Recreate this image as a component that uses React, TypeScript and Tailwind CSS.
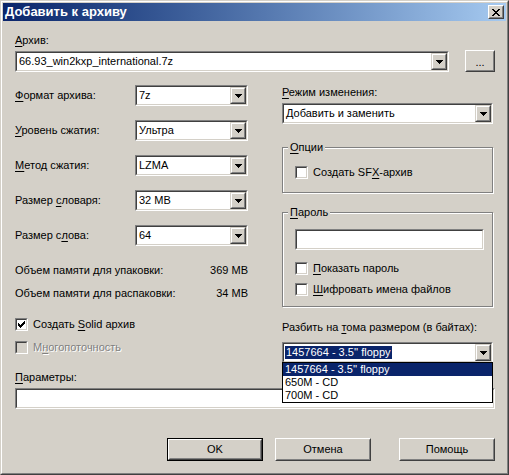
import type { ReactNode } from "react";

const FONT = "font-['Liberation_Sans',Arial,sans-serif]";

function U({ children }: { children: ReactNode }) {
  return <span className="underline underline-offset-[2px] decoration-1">{children}</span>;
}

function Sunken({ className = "", inner = "", children }: { className?: string; inner?: string; children?: ReactNode }) {
  return (
    <div className={`border border-t-[#808080] border-l-[#808080] border-r-white border-b-white ${className}`}>
      <div className={`h-full border border-t-[#404040] border-l-[#404040] border-r-[#d4d0c8] border-b-[#d4d0c8] ${inner}`}>
        {children}
      </div>
    </div>
  );
}

function Raised({ className = "", children }: { className?: string; children?: ReactNode }) {
  return (
    <div className={`border border-t-[#d4d0c8] border-l-[#d4d0c8] border-r-[#404040] border-b-[#404040] ${className}`}>
      <div className="flex h-full items-center justify-center border border-t-white border-l-white border-r-[#808080] border-b-[#808080] bg-[#d4d0c8]">
        {children}
      </div>
    </div>
  );
}

function Arrow() {
  return (
    <svg width="7" height="4" viewBox="0 0 7 4" shapeRendering="crispEdges">
      <path d="M0 0H7V1H6V2H5V3H4V4H3V3H2V2H1V1H0Z" fill="#000" />
    </svg>
  );
}

function Combo({ value, className = "", selected = false }: { value: string; className?: string; selected?: boolean }) {
  return (
    <Sunken className={`h-[21px] ${className}`} inner="flex bg-white">
      <div className="flex min-w-0 flex-1 items-center overflow-hidden whitespace-nowrap pl-[1px]">
        {selected ? (
          <span className="bg-[#0a246a] px-[1px] text-white">{value}</span>
        ) : (
          <span className="pl-[1px]">{value}</span>
        )}
      </div>
      <Raised className="h-full w-[16px] shrink-0">
        <Arrow />
      </Raised>
    </Sunken>
  );
}

function Check({ checked = false, disabled = false }: { checked?: boolean; disabled?: boolean }) {
  return (
    <Sunken
      className="h-[13px] w-[13px] shrink-0"
      inner={`flex items-center justify-center ${disabled ? "bg-[#d4d0c8]" : "bg-white"}`}
    >
      {checked ? (
        <svg width="7" height="7" viewBox="0 0 7 7" shapeRendering="crispEdges">
          <rect x="6" y="0" width="1" height="1" />
          <rect x="5" y="1" width="2" height="1" />
          <rect x="0" y="2" width="1" height="1" />
          <rect x="4" y="2" width="3" height="1" />
          <rect x="0" y="3" width="2" height="1" />
          <rect x="3" y="3" width="3" height="1" />
          <rect x="0" y="4" width="5" height="1" />
          <rect x="1" y="5" width="3" height="1" />
          <rect x="2" y="6" width="1" height="1" />
        </svg>
      ) : null}
    </Sunken>
  );
}

function CheckRow({ children, checked, disabled }: { children: ReactNode; checked?: boolean; disabled?: boolean }) {
  return (
    <div className="flex h-[13px] items-center gap-[5px]">
      <Check checked={checked} disabled={disabled} />
      <span className={disabled ? "text-[#808080] [text-shadow:1px_1px_0_#fff]" : ""}>{children}</span>
    </div>
  );
}

function Group({ label, className = "", children }: { label: ReactNode; className?: string; children?: ReactNode }) {
  return (
    <div className={`relative border border-[#808080] shadow-[inset_1px_1px_0_#fff,1px_1px_0_#fff] ${className}`}>
      <span className="absolute -top-[7px] left-[5px] bg-[#d4d0c8] px-[2px]">{label}</span>
      {children}
    </div>
  );
}

function PushButton({ children, isDefault = false, className = "" }: { children: ReactNode; isDefault?: boolean; className?: string }) {
  const face = (
    <div className="flex h-full items-center justify-center border border-t-white border-l-white border-r-[#404040] border-b-[#404040] bg-[#d4d0c8]">
      <div className="flex h-full w-full items-center justify-center border border-transparent border-r-[#808080] border-b-[#808080]">
        {children}
      </div>
    </div>
  );
  if (isDefault) {
    return <div className={`border border-black ${className}`}>{face}</div>;
  }
  return <div className={className}>{face}</div>;
}

const leftRows: { label: ReactNode; value: string }[] = [
  { label: <><U>Ф</U>ормат архива:</>, value: "7z" },
  { label: <><U>У</U>ровень сжатия:</>, value: "Ультра" },
  { label: <><U>М</U>етод сжатия:</>, value: "LZMA" },
  { label: <>Размер <U>с</U>ловаря:</>, value: "32 MB" },
  { label: <>Размер с<U>л</U>ова:</>, value: "64" },
];

export default function App() {
  return (
    <div
      className={`h-[475px] w-[509px] border border-t-[#d4d0c8] border-l-[#d4d0c8] border-r-[#404040] border-b-[#404040] bg-[#d4d0c8] text-[11px] leading-[13px] text-black ${FONT}`}
    >
      <div className="flex h-full flex-col border border-t-white border-l-white border-r-[#808080] border-b-[#808080] p-[1px]">
        {/* title bar */}
        <div className="flex h-[18px] items-center justify-between bg-linear-to-r from-[#0a246a] to-[#a6caf0] pl-[2px] pr-[2px]">
          <span className="text-[13px] font-bold leading-[16px] text-white">Добавить к архиву</span>
          <PushButton className="h-[14px] w-[16px]">
            <svg width="8" height="7" viewBox="0 0 8 7" shapeRendering="crispEdges">
              <path d="M0 0H2V1H3V2H5V1H6V0H8V1H7V2H6V3H5V4H6V5H7V6H8V7H6V6H5V5H3V6H2V7H0V6H1V5H2V4H3V3H2V2H1V1H0Z" fill="#000" />
            </svg>
          </PushButton>
        </div>

        <div className="pl-[12px] pr-[11px] pt-[13px]">
          <div>
            <U>А</U>рхив:
          </div>
          <div className="mt-[3px] flex items-end justify-between">
            <Combo className="w-[434px]" value="66.93_win2kxp_international.7z" />
            <PushButton className="h-[22px] w-[30px]">
              <span className="pt-[3px]">...</span>
            </PushButton>
          </div>

          <div className="mt-[13px] grid grid-cols-[233px_211px] items-start gap-x-[34px]">
            {/* left column */}
            <div className="flex flex-col">
              <div className="flex flex-col gap-[14px]">
                {leftRows.map((row) => (
                  <div key={row.value} className="flex h-[21px] items-center justify-between">
                    <span>{row.label}</span>
                    <Combo className="w-[113px]" value={row.value} />
                  </div>
                ))}
              </div>
              <div className="mt-[18px] flex justify-between">
                <span>Объем памяти для упаковки:</span>
                <span>369 MB</span>
              </div>
              <div className="mt-[10px] flex justify-between">
                <span>Объем памяти для распаковки:</span>
                <span>34 MB</span>
              </div>
              <div className="mt-[18px]">
                <CheckRow checked>
                  Создать <U>S</U>olid архив
                </CheckRow>
              </div>
              <div className="mt-[10px]">
                <CheckRow disabled>
                  М<U>н</U>огопоточность
                </CheckRow>
              </div>
            </div>

            {/* right column */}
            <div className="flex flex-col">
              <div className="mt-[1px]">
                <U>Р</U>ежим изменения:
              </div>
              <Combo className="mt-[4px]" value="Добавить и заменить" />
              <Group label={<><U>О</U>пции</>} className="mt-[23px] h-[46px] pl-[12px] pt-[18px]">
                <CheckRow>
                  Создать SF<U>X</U>-архив
                </CheckRow>
              </Group>
              <Group label={<><U>П</U>ароль</>} className="mt-[19px] h-[95px] pl-[12px] pt-[16px]">
                <Sunken className="h-[21px] w-[189px]" inner="bg-white" />
                <div className="mt-[12px]">
                  <CheckRow>
                    <U>П</U>оказать пароль
                  </CheckRow>
                </div>
                <div className="mt-[8px]">
                  <CheckRow>
                    <U>Ш</U>ифровать имена файлов
                  </CheckRow>
                </div>
              </Group>
              <div className="mt-[14px]">
                Разбить на <U>т</U>ома размером (в байтах):
              </div>
              <div className="relative mt-[8px]">
                <Combo value="1457664 - 3.5'' floppy" selected />
                <ul className="absolute left-0 right-0 top-[20px] z-10 border border-black bg-white">
                  <li className="h-[13px] bg-[#0a246a] pl-[2px] text-white">1457664 - 3.5'' floppy</li>
                  <li className="h-[13px] pl-[2px]">650M - CD</li>
                  <li className="h-[13px] pl-[2px]">700M - CD</li>
                </ul>
              </div>
            </div>
          </div>

          <div className="mt-[8px]">
            <U>П</U>араметры:
          </div>
          <Sunken className="mt-[4px] h-[21px] w-full" inner="bg-white" />

          <div className="mt-[29px] flex justify-end">
            <PushButton isDefault className="h-[23px] w-[96px]">
              OK
            </PushButton>
            <PushButton className="ml-[12px] h-[23px] w-[96px]">Отмена</PushButton>
            <PushButton className="ml-[28px] h-[23px] w-[96px]">Помощь</PushButton>
          </div>
        </div>
      </div>
    </div>
  );
}
